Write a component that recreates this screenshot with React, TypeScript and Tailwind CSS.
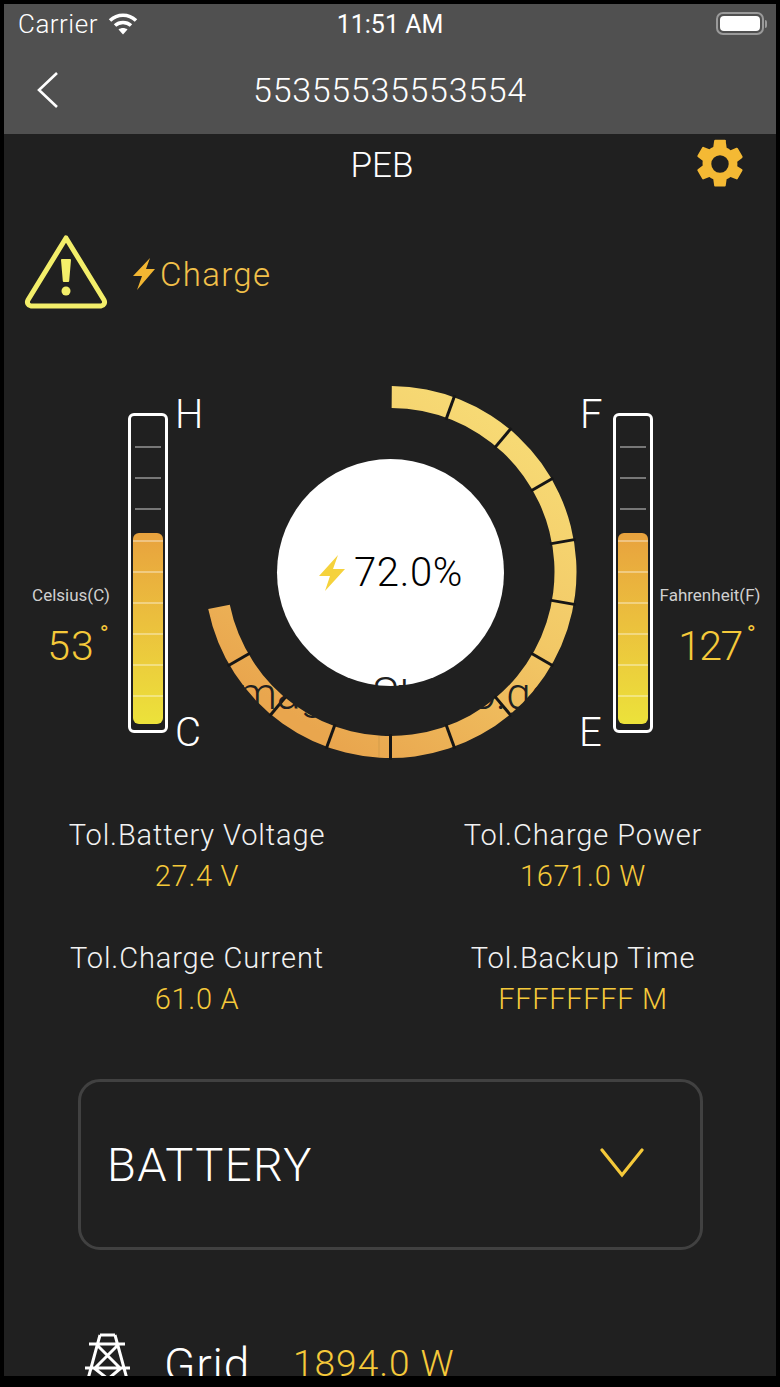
import React from "react";

const font = { fontFamily: "Roboto" };

function polar(r: number, deg: number) {
  const a = (deg * Math.PI) / 180;
  return [390.5 + r * Math.sin(a), 572 - r * Math.cos(a)];
}

function sector(r1: number, r2: number, from: number, to: number) {
  const [x1, y1] = polar(r2, from);
  const [x2, y2] = polar(r2, to);
  const [x3, y3] = polar(r1, to);
  const [x4, y4] = polar(r1, from);
  const large = to - from > 180 ? 1 : 0;
  return `M${x1} ${y1}A${r2} ${r2} 0 ${large} 1 ${x2} ${y2}L${x3} ${y3}A${r1} ${r1} 0 ${large} 0 ${x4} ${y4}Z`;
}

function Ring() {
  const seps = [20, 40, 60, 80, 100, 120, 140, 160, 180, 200, 220, 240];
  return (
    <svg viewBox="190 370 400 400" className="h-[400px] w-[400px]">
      <defs>
        <linearGradient id="ringGrad" gradientUnits="userSpaceOnUse" x1="520" y1="390" x2="300" y2="720">
          <stop offset="0" stopColor="#f8de78" />
          <stop offset="0.5" stopColor="#f2c866" />
          <stop offset="1" stopColor="#e9a64e" />
        </linearGradient>
      </defs>
      <path d={sector(164, 186, 0.4, 258.5)} fill="url(#ringGrad)" />
      <line x1="379" y1="736" x2="379" y2="757" stroke="#d39c4a" strokeWidth="1" />
      {seps.map((d) => {
        const [a, b] = polar(162, d);
        const [c, e] = polar(188, d);
        return <line key={d} x1={a} y1={b} x2={c} y2={e} stroke="#161616" strokeWidth="3" />;
      })}
    </svg>
  );
}

function Tank() {
  return (
    <div className="flex h-[320px] w-[40px] flex-col rounded-[6px] border-[3px] border-white px-[2px] pt-[3px] pb-[6px]">
      <div className="flex h-[114px] shrink-0 flex-col items-center gap-[29px] pt-[27px]">
        <div className="h-[2px] w-[26px] bg-[#777777]" />
        <div className="h-[2px] w-[26px] bg-[#777777]" />
        <div className="h-[2px] w-[26px] bg-[#777777]" />
      </div>
      <div className="flex flex-1 flex-col items-center gap-[29px] rounded-[6px] bg-gradient-to-b from-[#e8a23e] to-[#ece23a] pt-[7px]">
        {[0, 1, 2, 3, 4, 5].map((i) => (
          <div key={i} className="h-[2px] w-full bg-white/35" />
        ))}
      </div>
    </div>
  );
}

function Stat({ label, value }: { label: string; value: string }) {
  return (
    <div className="flex flex-col items-center">
      <div className="text-[29px] leading-[36px] font-light tracking-[0.9px] whitespace-nowrap text-[#f2f2f2]">{label}</div>
      <div className="mt-[5px] text-[29px] leading-[36px] font-light tracking-[0.7px] whitespace-nowrap text-[#f5c93a]">{value}</div>
    </div>
  );
}

export default function App() {
  return (
    <div className="h-[1387px] w-[780px] overflow-hidden bg-black px-[4px] pt-[4px] pb-[11px]" style={font}>
      <div className="flex h-full w-full flex-col overflow-hidden bg-[#202020]">
        <header className="h-[130px] shrink-0 bg-[#505050] text-white">
          <div className="relative flex h-[42px] items-start justify-center pt-[6px]">
            <div className="absolute top-[6px] left-[14px] flex items-center gap-[10px]">
              <span className="text-[26px] leading-[28px] font-light tracking-[0.5px]">Carrier</span>
              <svg viewBox="0 0 30 24" className="h-[24px] w-[30px]" fill="none" stroke="#fff" strokeWidth="3.6">
                <path d="M2 8.5C9.5 1.5 20.5 1.5 28 8.5" />
                <path d="M7 13.5C11.5 9.5 18.5 9.5 23 13.5" />
                <path d="M15 22.5L10.5 17.6C13 15.6 17 15.6 19.5 17.6Z" fill="#fff" stroke="none" />
              </svg>
            </div>
            <span className="text-[25px] leading-[30px] font-normal">11:51 AM</span>
            <div className="absolute top-[8px] right-[9px] flex items-center">
              <div className="flex h-[23px] w-[48px] items-center rounded-[7px] border-2 border-[#9a9a9a] p-[2px]">
                <div className="h-full w-full rounded-[4px] bg-white" />
              </div>
              <div className="ml-[1px] h-[8px] w-[2px] rounded-r-[2px] bg-[#9a9a9a]" />
            </div>
          </div>
          <div className="relative flex h-[88px] items-center justify-center">
            <svg viewBox="0 0 24 38" className="absolute top-[25px] left-[32px] h-[38px] w-[24px]" fill="none" stroke="#fff" strokeWidth="2.6">
              <path d="M21 2L3 19l18 17" />
            </svg>
            <span className="text-[34px] leading-[44px] font-light tracking-[0.7px]">55355535553554</span>
          </div>
        </header>

        <div className="relative flex h-[60px] shrink-0 items-center justify-center">
          <span className="mt-[4px] mr-[16px] text-[35px] leading-[40px] font-light text-white">PEB</span>
          <svg viewBox="0 0 24 24" className="absolute top-[1px] right-[27px] h-[58px] w-[58px]" fill="#f4b934">
            <path d="M19.14 12.94a7.1 7.1 0 0 0 0-1.88l2.03-1.58a.5.5 0 0 0 .12-.64l-1.92-3.32a.5.5 0 0 0-.6-.22l-2.39.96a7 7 0 0 0-1.62-.94l-.36-2.54A.5.5 0 0 0 13.9 2h-3.84a.5.5 0 0 0-.48.42l-.36 2.54c-.59.24-1.13.56-1.62.94l-2.39-.96a.5.5 0 0 0-.6.22L2.69 8.48a.5.5 0 0 0 .12.64l2.03 1.58a7.3 7.3 0 0 0 0 1.88l-2.03 1.58a.5.5 0 0 0-.12.64l1.92 3.32c.12.22.37.29.6.22l2.39-.96c.5.38 1.03.7 1.62.94l.36 2.54c.05.24.24.42.48.42h3.84c.24 0 .44-.18.48-.42l.36-2.54a7 7 0 0 0 1.62-.94l2.39.96c.22.08.48 0 .6-.22l1.92-3.32a.5.5 0 0 0-.12-.64ZM12 15.6A3.6 3.6 0 1 1 12 8.4a3.6 3.6 0 0 1 0 7.2Z" />
          </svg>
        </div>

        <div className="mt-[38px] flex h-[80px] shrink-0 items-center pl-[20px]">
          <svg viewBox="0 0 84 76" className="h-[76px] w-[84px]" fill="none">
            <path d="M42 4L80 66a4 4 0 0 1-3 6H7a4 4 0 0 1-3-6Z" stroke="#f3ee6a" strokeWidth="5" strokeLinejoin="round" />
            <path d="M38 26h8l-1.8 21h-4.4Z" fill="#f3ee6a" stroke="#f3ee6a" strokeWidth="2" strokeLinejoin="round" />
            <circle cx="42" cy="57" r="4.5" fill="#f3ee6a" />
          </svg>
          <svg viewBox="0 0 24 34" className="mt-[4px] ml-[24px] h-[34px] w-[24px]" fill="#f2b632">
            <path d="M18 1L1 19h9L5 33l18-21h-9Z" />
          </svg>
          <span className="mt-[6px] ml-[4px] text-[33px] leading-[40px] font-light tracking-[1.3px] text-[#f2c04a]">Charge</span>
        </div>

        <div className="relative mt-[58px] flex h-[400px] shrink-0 justify-center">
          <Ring />
          <div className="absolute top-[89px] left-[273px] flex h-[227px] w-[227px] items-center justify-center rounded-full bg-white">
            <svg viewBox="0 0 28 38" className="h-[38px] w-[28px]" fill="#f5d23c">
              <path d="M20 1L1 22h11L7 37l20-22H15l5-14Z" />
            </svg>
            <span className="ml-[8px] text-[40px] leading-[44px] font-light tracking-[0.7px] text-black">72.0%</span>
          </div>
          <div className="absolute top-[43px] left-[124px]"><Tank /></div>
          <div className="absolute top-[43px] left-[609px]"><Tank /></div>
          <span className="absolute top-[24px] left-[171px] text-[40px] leading-[42px] font-light text-white">H</span>
          <span className="absolute top-[342px] left-[171px] text-[40px] leading-[42px] font-light text-white">C</span>
          <span className="absolute top-[24px] left-[576px] text-[40px] leading-[42px] font-light text-white">F</span>
          <span className="absolute top-[342px] left-[575px] text-[40px] leading-[42px] font-light text-white">E</span>
          <div className="absolute top-[215px] left-[22px] flex w-[90px] flex-col items-center">
            <span className="text-[17px] leading-[20px] text-[#d0d0d0]">Celsius(C)</span>
            <span className="relative mt-[17px] text-[41px] leading-[48px] font-light tracking-[1px] text-[#f5c93a]">53<span className="absolute top-[-12px] left-full ml-[5px] text-[24px] font-normal">°</span></span>
          </div>
          <div className="absolute top-[215px] left-[651px] flex w-[110px] flex-col items-center">
            <span className="text-[17px] leading-[20px] whitespace-nowrap text-[#d0d0d0]">Fahrenheit(F)</span>
            <span className="relative mt-[17px] text-[41px] leading-[48px] font-light tracking-[-1.5px] text-[#f5c93a]">127<span className="absolute top-[-12px] left-full ml-[5px] text-[24px] font-normal">°</span></span>
          </div>
          <span className="absolute top-[298px] left-[222px] text-[44px] leading-[52px] font-light whitespace-nowrap text-[#202020] [word-spacing:14px]">Image Studio.go</span>
        </div>

        <div className="mt-[47px] grid shrink-0 grid-cols-2 gap-y-[46px]">
          <div className="w-[386px]"><Stat label="Tol.Battery Voltage" value="27.4 V" /></div>
          <Stat label="Tol.Charge Power" value="1671.0 W" />
          <div className="w-[386px]"><Stat label="Tol.Charge Current" value="61.0 A" /></div>
          <Stat label="Tol.Backup Time" value="FFFFFFFF M" />
        </div>

        <div className="mt-[62px] mr-[73px] ml-[74px] flex h-[171px] shrink-0 items-center justify-between rounded-[22px] border-[3px] border-[#414141] pr-[56px] pl-[26px]">
          <span className="text-[47px] leading-[54px] font-light tracking-[1.5px] text-white">BATTERY</span>
          <svg viewBox="0 0 44 30" className="mb-[4px] h-[30px] w-[44px]" fill="none" stroke="#f5c93a" strokeWidth="3.2" strokeLinecap="round">
            <path d="M2 2l20 25L42 2" />
          </svg>
        </div>

        <div className="mt-[83px] flex items-start pl-[81px]">
          <svg viewBox="0 0 46 46" className="h-[46px] w-[46px] shrink-0" fill="none" stroke="#fff" strokeWidth="3">
            <path d="M15 2h15M15 2L3 46M30 2l12 44M4 11h36M0 35h45M11 11l24 24M34 11L10 35M9 35l14 11M36 35L23 46" />
          </svg>
          <span className="mt-[6px] ml-[33px] text-[46px] leading-[52px] font-light tracking-[0.8px] text-white">Grid</span>
          <span className="mt-[9px] ml-[43px] text-[37px] leading-[44px] font-light tracking-[1px] text-[#f5c93a]">1894.0 W</span>
        </div>
      </div>
    </div>
  );
}
